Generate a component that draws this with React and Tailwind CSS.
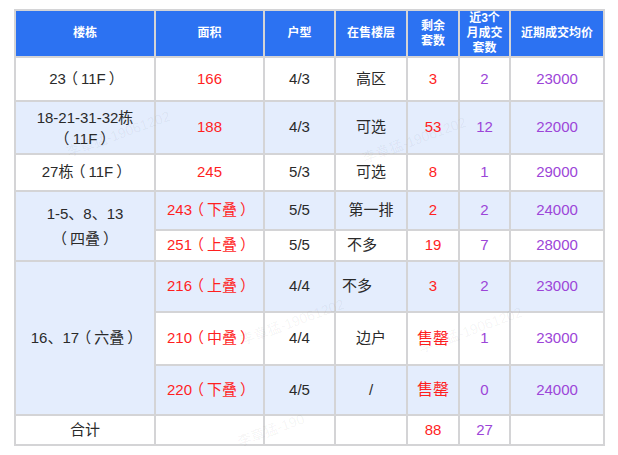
import React from 'react';

const red = 'text-[#ff1f1f]';
const purple = 'text-[#9c45d8]';

const cell = 'border-2 border-[#d4d4d6] text-center align-middle p-0';

const Td = ({ className = '', children, ...rest }) => (
  <td className={`${cell} ${className}`} {...rest}>
    {children}
  </td>
);

// full-width brackets nudged to sit centred in their box, as in the screenshot
const Br = ({ children }) => (
  <>
    <span className="relative -left-[3px]">（</span>
    {children}
    <span className="relative left-[3px]">）</span>
  </>
);

const marks = [
  { x: 64, y: 124, t: '李章猛-19061202' },
  { x: 360, y: 130, t: '李章猛-19061202' },
  { x: 238, y: 312, t: '李章猛-19061202' },
  { x: 416, y: 320, t: '李章猛-19061202' },
  { x: 236, y: 420, t: '李章猛-190' },
];

export default function App() {
  return (
    <div className="relative h-[455px] w-[618px] overflow-hidden bg-white pl-[14px] pt-[9px] font-['Liberation_Sans','Noto_Sans_CJK_SC',sans-serif] text-[15px] text-[#2a2a2a]">
      <table className="table-fixed border-collapse border-2 border-[#d4d4d6] w-[591px]">
        <colgroup>
          <col className="w-[140px]" />
          <col className="w-[109px]" />
          <col className="w-[71px]" />
          <col className="w-[72px]" />
          <col className="w-[52px]" />
          <col className="w-[51px]" />
          <col className="w-[94px]" />
        </colgroup>
        <thead>
          <tr className="h-[47px] bg-[#2c72f2] text-[12px] font-bold leading-[15px] text-white">
            <Td>楼栋</Td>
            <Td>面积</Td>
            <Td>户型</Td>
            <Td>在售楼层</Td>
            <Td>剩余<br />套数</Td>
            <Td>近3个<br />月成交<br />套数</Td>
            <Td>近期成交均价</Td>
          </tr>
        </thead>
        <tbody>
          <tr className="h-[44px] bg-white">
            <Td>23<Br>11F</Br></Td>
            <Td className={red}>166</Td>
            <Td>4/3</Td>
            <Td>高区</Td>
            <Td className={red}>3</Td>
            <Td className={purple}>2</Td>
            <Td className={purple}>23000</Td>
          </tr>
          <tr className="h-[53px] bg-[#e4edfd]">
            <Td className="leading-[21px]">18-21-31-32栋<br /><Br>11F</Br></Td>
            <Td className={red}>188</Td>
            <Td>4/3</Td>
            <Td>可选</Td>
            <Td className={red}>53</Td>
            <Td className={purple}>12</Td>
            <Td className={purple}>22000</Td>
          </tr>
          <tr className="h-[37px] bg-white">
            <Td>27栋<Br>11F</Br></Td>
            <Td className={red}>245</Td>
            <Td>5/3</Td>
            <Td>可选</Td>
            <Td className={red}>8</Td>
            <Td className={purple}>1</Td>
            <Td className={purple}>29000</Td>
          </tr>
          <tr className="h-[39px] bg-[#e4edfd]">
            <Td rowSpan={2} className="bg-[#e4edfd] leading-[25px]">1-5、8、13<br /><Br>四叠</Br></Td>
            <Td className={red}>243<Br>下叠</Br></Td>
            <Td>5/5</Td>
            <Td>第一排</Td>
            <Td className={red}>2</Td>
            <Td className={purple}>2</Td>
            <Td className={purple}>24000</Td>
          </tr>
          <tr className="h-[31px] bg-white">
            <Td className={red}>251<Br>上叠</Br></Td>
            <Td>5/5</Td>
            <Td className="text-left pl-[11px]">不多</Td>
            <Td className={red}>19</Td>
            <Td className={purple}>7</Td>
            <Td className={purple}>28000</Td>
          </tr>
          <tr className="h-[51px] bg-[#e4edfd]">
            <Td rowSpan={3} className="bg-[#e4edfd]">16、17<Br>六叠</Br></Td>
            <Td className={red}>216<Br>上叠</Br></Td>
            <Td>4/4</Td>
            <Td className="text-left pl-[6px]">不多</Td>
            <Td className={red}>3</Td>
            <Td className={purple}>2</Td>
            <Td className={purple}>23000</Td>
          </tr>
          <tr className="h-[53px] bg-white">
            <Td className={red}>210<Br>中叠</Br></Td>
            <Td>4/4</Td>
            <Td>边户</Td>
            <Td className={`${red} text-[16px]`}>售罄</Td>
            <Td className={purple}>1</Td>
            <Td className={purple}>23000</Td>
          </tr>
          <tr className="h-[50px] bg-[#e4edfd]">
            <Td className={red}>220<Br>下叠</Br></Td>
            <Td>4/5</Td>
            <Td>/</Td>
            <Td className={`${red} text-[16px]`}>售罄</Td>
            <Td className={purple}>0</Td>
            <Td className={purple}>24000</Td>
          </tr>
          <tr className="h-[30px] bg-white">
            <Td>合计</Td>
            <Td></Td>
            <Td></Td>
            <Td></Td>
            <Td className={red}>88</Td>
            <Td className={purple}>27</Td>
            <Td></Td>
          </tr>
        </tbody>
      </table>
      {marks.map((m, i) => (
        <span
          key={i}
          className="pointer-events-none absolute -rotate-[20deg] whitespace-nowrap text-[14px] text-[#000]/[0.05]"
          style={{ left: m.x, top: m.y }}
        >
          {m.t}
        </span>
      ))}
    </div>
  );
}
